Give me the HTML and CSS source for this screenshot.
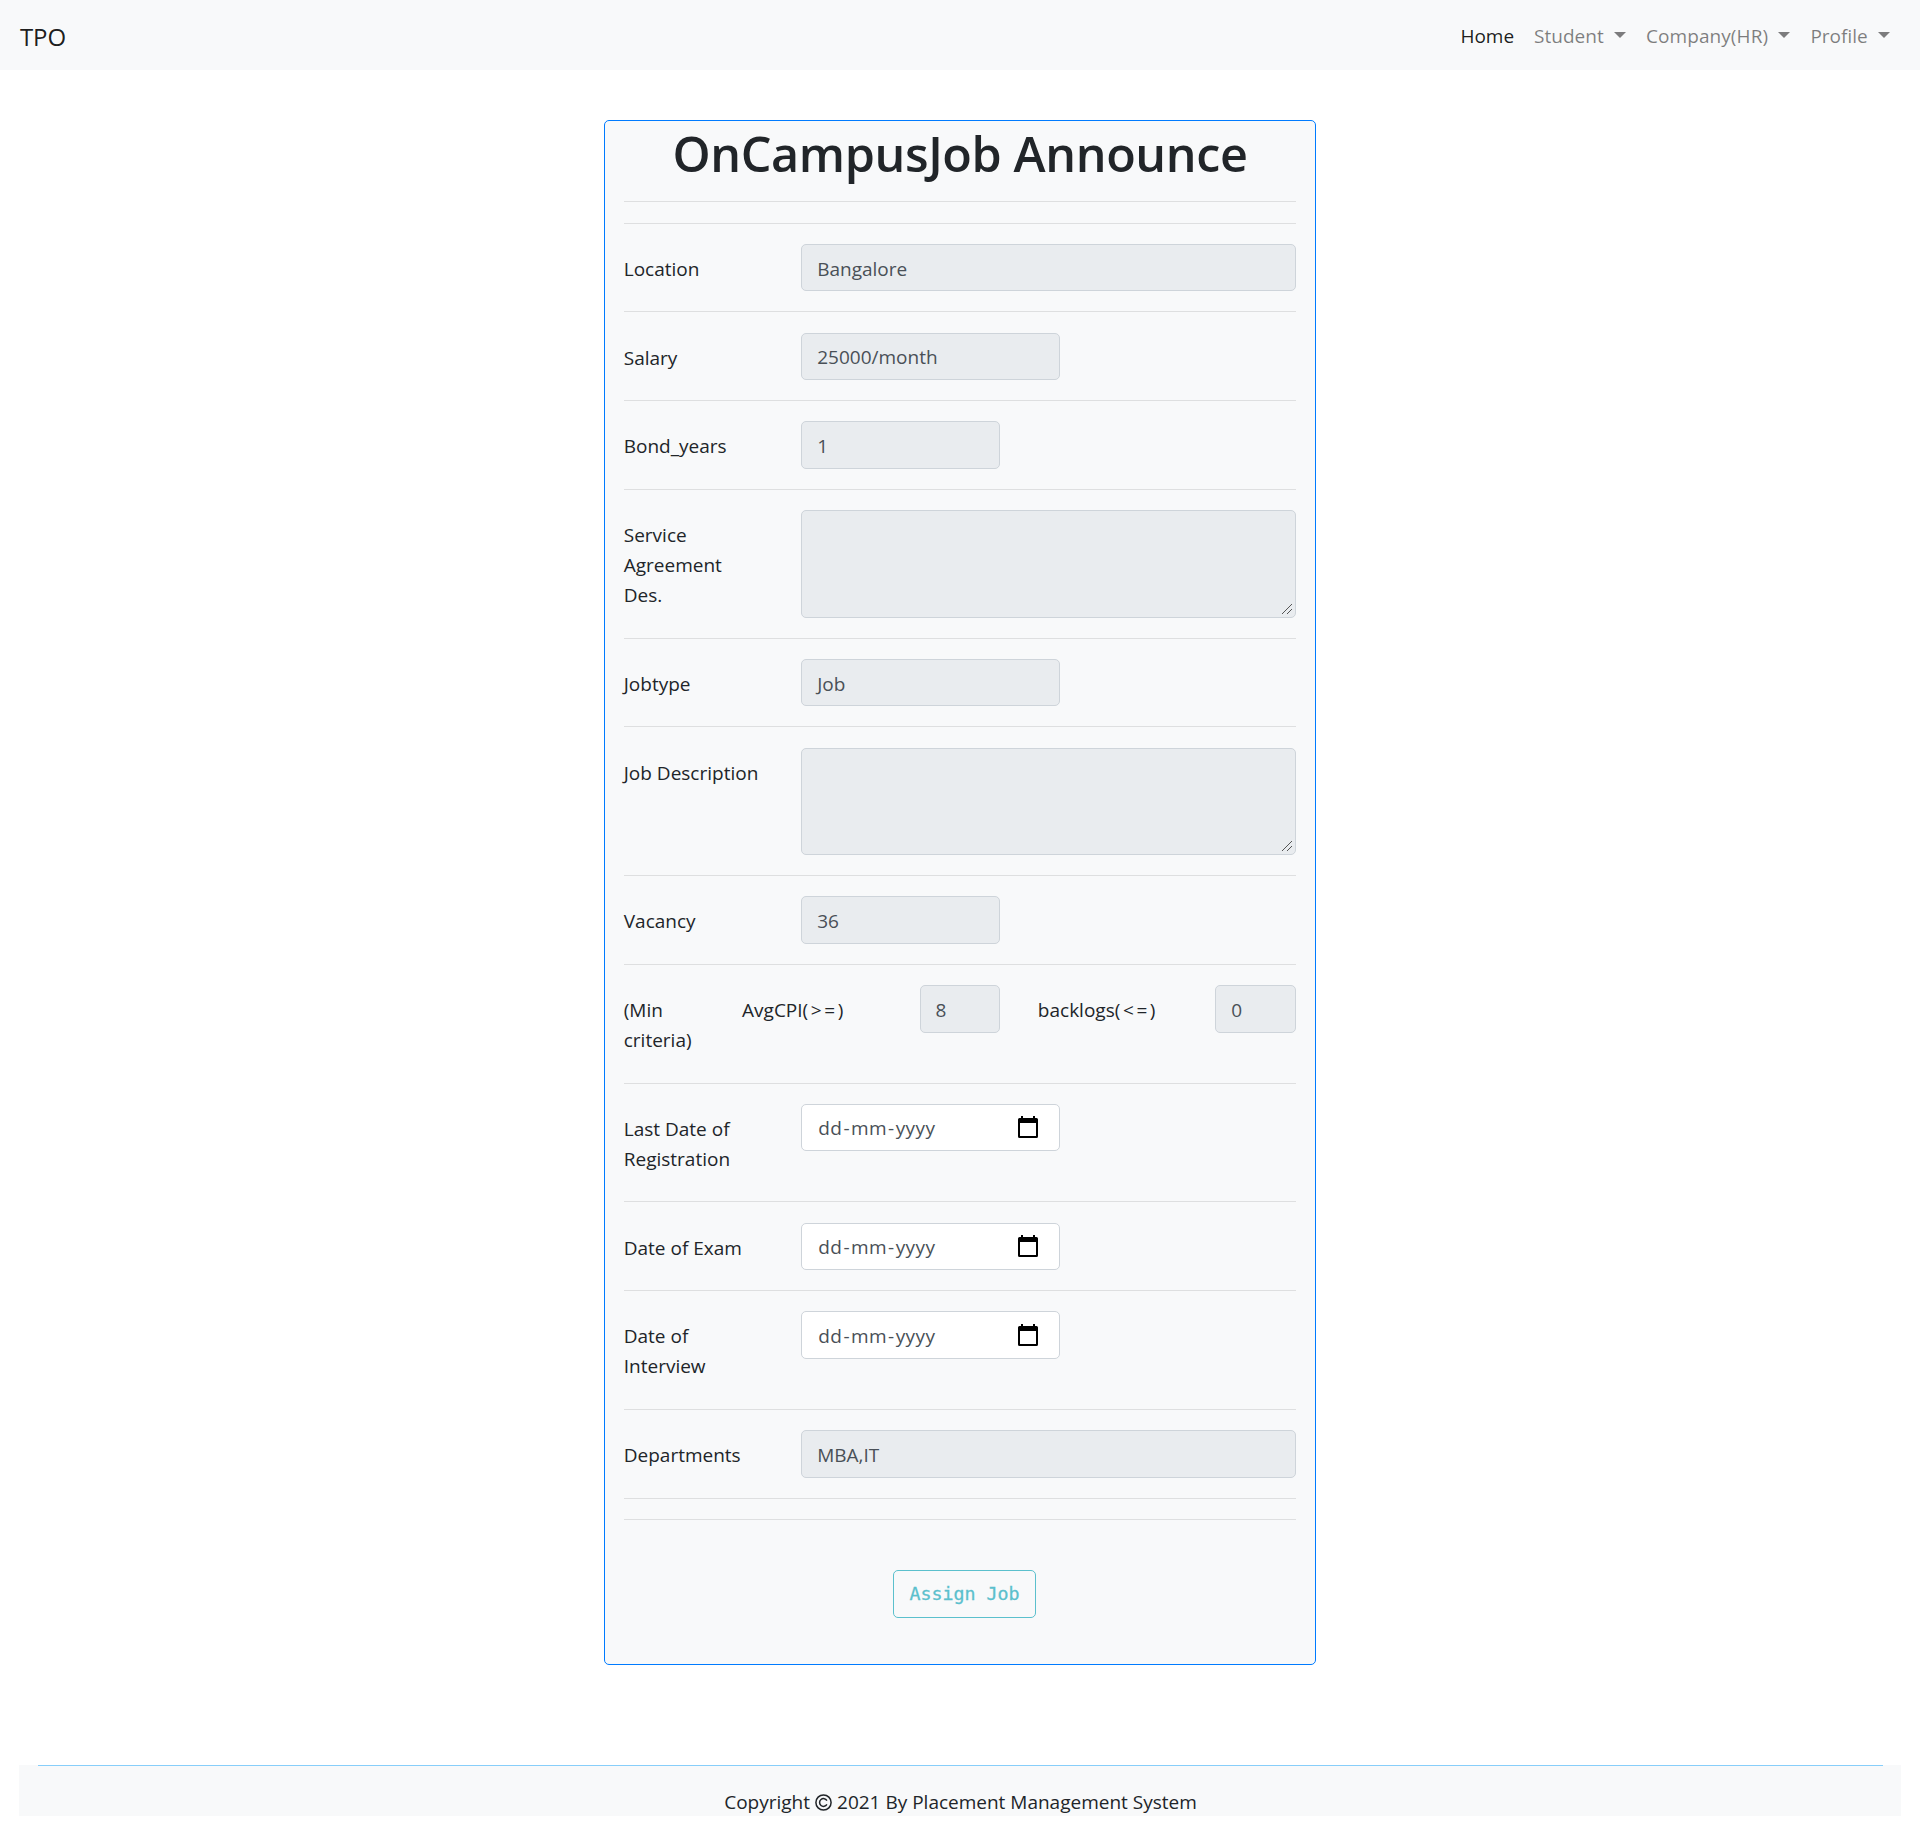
FILE: index.html
```html
<!DOCTYPE html>
<html lang="en">
<head>
<meta charset="utf-8">
<title>OnCampusJob Announce</title>
<link rel="stylesheet" href="styles.css">
</head>
<body>
<nav class="navbar">
  <a class="brand">TPO</a>
  <ul class="menu">
    <li class="active"><span>Home</span></li>
    <li><span>Student</span><i class="caret"></i></li>
    <li><span class="wide">Company(HR)</span><i class="caret"></i></li>
    <li><span>Profile</span><i class="caret"></i></li>
  </ul>
</nav>
<main class="card">
  <h1>OnCampusJob Announce</h1>
  <hr><hr>
  <div class="row"><label class="c3">Location</label><div class="c9"><div class="field">Bangalore</div></div></div>
  <hr>
  <div class="row"><label class="c3">Salary</label><div class="c5"><div class="field">25000/month</div></div></div>
  <hr>
  <div class="row"><label class="c3">Bond_years</label><div class="c4"><div class="field">1</div></div></div>
  <hr>
  <div class="row"><label class="c3">Service<br>Agreement<br>Des.</label><div class="c9"><div class="field area"><svg class="grip" viewBox="0 0 12 12"><path d="M1 11L11 1M6 11L11 6"/></svg></div></div></div>
  <hr>
  <div class="row"><label class="c3">Jobtype</label><div class="c5"><div class="field">Job</div></div></div>
  <hr>
  <div class="row"><label class="c3">Job Description</label><div class="c9"><div class="field area"><svg class="grip" viewBox="0 0 12 12"><path d="M1 11L11 1M6 11L11 6"/></svg></div></div></div>
  <hr>
  <div class="row"><label class="c3">Vacancy</label><div class="c4"><div class="field">36</div></div></div>
  <hr>
  <div class="row"><label class="c2">(Min<br>criteria)</label><label class="c3">AvgCPI<span class="ops">(&gt;=</span>)</label><div class="c2"><div class="field">8</div></div><label class="c3">backlogs<span class="ops">(&lt;=</span>)</label><div class="c2"><div class="field">0</div></div></div>
  <hr>
  <div class="row"><label class="c3">Last Date of<br>Registration</label><div class="c5"><div class="field date"><span>dd<b>-</b>mm<b>-</b>yyyy</span><svg class="cal" viewBox="0 0 20 22"><path d="M3 0h2v2h10V0h2v2h1.500Q20 2 20 3.500V20.500Q20 22 18.500 22H1.500Q0 22 0 20.500V3.500Q0 2 1.500 2H3zM2 7V20H18V7z" fill-rule="evenodd"/></svg></div></div></div>
  <hr>
  <div class="row"><label class="c3">Date of Exam</label><div class="c5"><div class="field date"><span>dd<b>-</b>mm<b>-</b>yyyy</span><svg class="cal" viewBox="0 0 20 22"><path d="M3 0h2v2h10V0h2v2h1.500Q20 2 20 3.500V20.500Q20 22 18.500 22H1.500Q0 22 0 20.500V3.500Q0 2 1.500 2H3zM2 7V20H18V7z" fill-rule="evenodd"/></svg></div></div></div>
  <hr>
  <div class="row"><label class="c3">Date of<br>Interview</label><div class="c5"><div class="field date"><span>dd<b>-</b>mm<b>-</b>yyyy</span><svg class="cal" viewBox="0 0 20 22"><path d="M3 0h2v2h10V0h2v2h1.500Q20 2 20 3.500V20.500Q20 22 18.500 22H1.500Q0 22 0 20.500V3.500Q0 2 1.500 2H3zM2 7V20H18V7z" fill-rule="evenodd"/></svg></div></div></div>
  <hr>
  <div class="row"><label class="c3">Departments</label><div class="c9"><div class="field">MBA,IT</div></div></div>
  <hr><hr>
  <button class="assign" type="button">Assign Job</button>
</main>
<footer>
  <div class="copy"><span>Copyright</span><svg class="cr" viewBox="0 0 17 17"><circle cx="8.500" cy="8.500" r="7.600"/><path d="M11.900 6.600A3.900 3.900 0 1 0 11.900 10.400"/></svg><span>2021 By Placement Management System</span></div>
</footer>
</body>
</html>
```
FILE: styles.css
```css
* { box-sizing: border-box; }
body { margin: 0; background: #fff; color: #212529; font: 19px/30px "Open Sans", "Noto Sans", sans-serif; }
.navbar { height: 70px; padding: 0 20px; display: flex; align-items: center; justify-content: space-between; background: #f8f9fa; }
.brand { font-size: 24px; color: rgba(0,0,0,.9); padding-top: 3px; letter-spacing: -.1px; }
.menu { list-style: none; display: flex; margin: 0; padding: 2px 0 0; color: rgba(0,0,0,.5); }
.menu li { padding: 0 10px; display: flex; align-items: center; }
.menu .active { color: rgba(0,0,0,.9); }
.menu .wide { letter-spacing: .08px; }
.caret { width: 0; height: 0; margin: 0 0 3px 10.3px; border: 6px solid transparent; border-top-color: currentColor; border-bottom: 0; }
.card { width: 712px; height: 1545px; margin: 50px auto 0; padding: 0 19px; border: 1px solid #007bff; border-radius: 5px; background: #f8f9fa; }
h1 { margin: 2px 0 0; height: 58.25px; font-size: 48.5px; line-height: 60px; font-weight: 600; text-align: center; white-space: nowrap; letter-spacing: -.38px; }
hr { border: 0; border-top: 1px solid rgba(0,0,0,.1); height: 1px; margin: 20px 0 20.25px; }
.row { display: grid; grid-template-columns: repeat(12, 59.17px); margin: 0 -19px; }
.row > * { padding: 0 18.75px; }
.row > label { padding-top: 10px; padding-bottom: 7.5px; white-space: nowrap; }
.c2 { grid-column: span 2; }
.c3 { grid-column: span 3; }
.c4 { grid-column: span 4; }
.c5 { grid-column: span 5; }
.c9 { grid-column: span 9; }
.ops { letter-spacing: 2.6px; }
.field { height: 47.5px; padding: 2px 15px 0; display: flex; align-items: center; color: #495057; background: #e9ecef; border: 1px solid #ced4da; border-radius: 5px; }
.area { height: 107.5px; padding: 0 2px 2px; align-items: flex-end; justify-content: flex-end; }
.grip { width: 12px; height: 12px; fill: none; stroke: #555; stroke-width: 1; }
.date { background: #fff; justify-content: space-between; padding: 1px 21px 0 16px; }
.date span { letter-spacing: .45px; }
.date b { font-weight: 400; margin: 0 1px; }
.cal { width: 20px; height: 22px; fill: #000; margin-bottom: 2px; }
.assign { display: block; width: 143px; height: 48px; margin: 50px 0 0 269px; padding: 0; border: 1px solid #5bc0cd; border-radius: 5px; background: transparent; color: #5bc0cd; font: 18.27px/30px "DejaVu Sans Mono", monospace; -webkit-text-stroke: .3px #5bc0cd; }
footer { margin: 100px 19px 0; padding: 0 18px 0 19px; height: 51px; background: #f8f9fa; }
.copy { border-top: 1px solid #87cefa; padding-top: 22px; display: flex; justify-content: center; align-items: center; gap: 5px; height: 51px; }
.cr { width: 17px; height: 17px; fill: none; stroke: #212529; stroke-width: 1.500; }
```
